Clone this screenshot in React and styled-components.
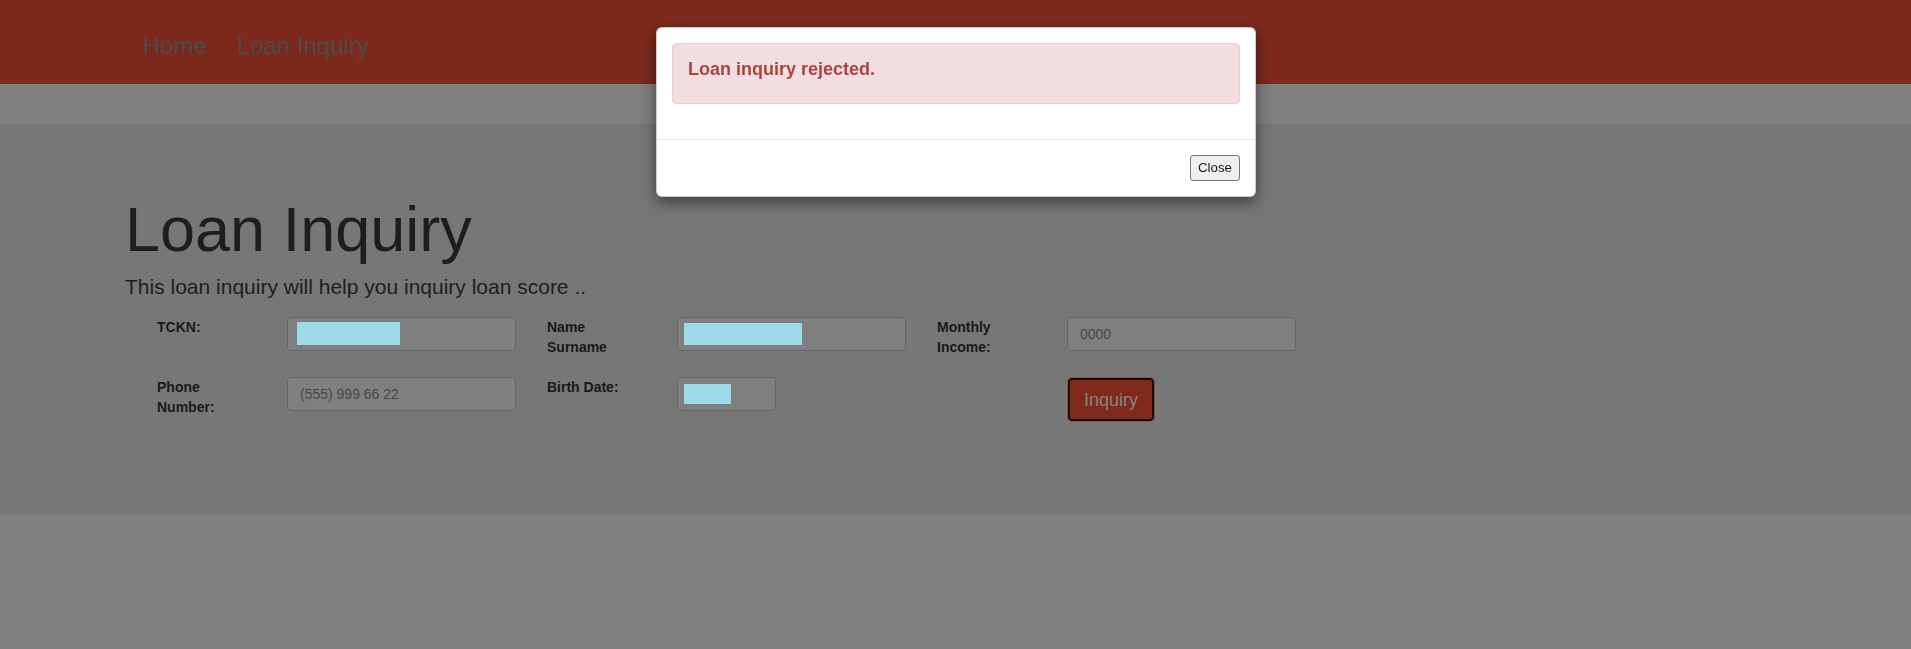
import React from "react";
import styled, { createGlobalStyle } from "styled-components";

const GlobalStyle = createGlobalStyle`
  html, body {
    margin: 0;
    padding: 0;
    background-color: #808080;
    font-family: "Liberation Sans", Arial, sans-serif;
  }
  * {
    box-sizing: border-box;
  }
`;

// Page (already dimmed by the modal backdrop)
const Page = styled.div`
  min-height: 649px;
  background-color: #808080;
`;

const Navbar = styled.nav`
  height: 84px;
  background-color: #7d2a1d;
  display: flex;
  align-items: flex-start;
  padding-left: 128px;
`;

const NavLink = styled.a`
  display: block;
  padding: 32px 15px 0;
  font-size: 24px;
  line-height: 27px;
  color: #4b4b4b;
  text-decoration: none;
`;

const Jumbotron = styled.section`
  margin-top: 40px;
  height: 391px;
  background-color: #777777;
  padding: 71px 0 0 125px;
`;

const Title = styled.h1`
  margin: 0;
  font-size: 63px;
  line-height: 69px;
  font-weight: 400;
  color: #1e1e1e;
`;

const Lead = styled.p`
  margin: 8px 0 15px;
  font-size: 21px;
  line-height: 30px;
  font-weight: 200;
  color: #1e1e1e;
`;

const Form = styled.form`
  display: flex;
  flex-direction: column;
  gap: 20px;
  padding-left: 32px;
`;

const FormRow = styled.div`
  display: flex;
  align-items: flex-start;
  gap: 31px;
`;

const Group = styled.div`
  display: grid;
  grid-template-columns: 130px 229px;
  align-items: start;
  min-height: 40px;
`;

const Label = styled.label`
  max-width: 100px;
  font-size: 14px;
  line-height: 20px;
  font-weight: 700;
  color: #1a1a1a;
`;

const Input = styled.input`
  width: ${(p) => p.$width || 229}px;
  height: 34px;
  padding: 6px 12px;
  border: 1px solid #666666;
  border-radius: 4px;
  background-color: #7f7f7f;
  font-family: inherit;
  font-size: 14px;
  color: #2a2a2a;
  outline: none;

  &::placeholder {
    color: #474747;
  }
`;

const MaskedField = styled.div`
  width: ${(p) => p.$width || 229}px;
  height: 34px;
  border: 1px solid #666666;
  border-radius: 4px;
  background-color: #7f7f7f;
  padding: ${(p) => p.$top}px 0 0 ${(p) => p.$left}px;
`;

const Mask = styled.span`
  display: block;
  width: ${(p) => p.$w}px;
  height: ${(p) => p.$h}px;
  background-color: #9cdaea;
`;

const SubmitButton = styled.button`
  justify-self: start;
  height: 45px;
  padding: 0 16px;
  border: 1px solid #a14a3a;
  border-radius: 5px;
  box-shadow: inset 0 0 0 2px #101010;
  background-color: #7f2a1c;
  font-family: inherit;
  font-size: 18px;
  line-height: 24px;
  color: #868686;
`;

// Modal
const Modal = styled.div`
  position: fixed;
  top: 27px;
  left: 656px;
  width: 600px;
  background-color: #ffffff;
  border: 1px solid rgba(0, 0, 0, 0.2);
  border-radius: 6px;
  box-shadow: 0 5px 15px rgba(0, 0, 0, 0.5);
  z-index: 1050;
`;

const ModalBody = styled.div`
  padding: 15px;
`;

const Alert = styled.div`
  margin-bottom: 20px;
  padding: 15px;
  border: 1px solid #ebccd1;
  border-radius: 4px;
  background-color: #f2dede;
  color: #a94442;
`;

const AlertText = styled.h4`
  margin: 0 0 9px;
  font-size: 18px;
  line-height: 20px;
  font-weight: 700;
`;

const ModalFooter = styled.div`
  display: flex;
  justify-content: flex-end;
  padding: 15px;
  border-top: 1px solid #e5e5e5;
`;

const CloseButton = styled.button`
  padding: 4px 7px 5px;
  border: 1px solid #767676;
  border-radius: 3px;
  background-color: #efefef;
  font-family: "Liberation Sans", Arial, sans-serif;
  font-size: 13.33px;
  line-height: 15px;
  color: #1a1a1a;
`;

const App = () => {
  return (
    <Page>
      <GlobalStyle />
      <Navbar>
        <NavLink href="#">Home</NavLink>
        <NavLink href="#">Loan Inquiry</NavLink>
      </Navbar>

      <Jumbotron>
        <Title>Loan Inquiry</Title>
        <Lead>This loan inquiry will help you inquiry loan score ..</Lead>

        <Form onSubmit={(e) => e.preventDefault()}>
          <FormRow>
            <Group>
              <Label>TCKN:</Label>
              <MaskedField $top={4} $left={9}>
                <Mask $w={103} $h={23} />
              </MaskedField>
            </Group>
            <Group>
              <Label>Name Surname</Label>
              <MaskedField $top={5} $left={6}>
                <Mask $w={118} $h={22} />
              </MaskedField>
            </Group>
            <Group>
              <Label>Monthly Income:</Label>
              <Input placeholder="0000" readOnly />
            </Group>
          </FormRow>

          <FormRow>
            <Group>
              <Label>Phone Number:</Label>
              <Input placeholder="(555) 999 66 22" readOnly />
            </Group>
            <Group>
              <Label>Birth Date:</Label>
              <MaskedField $width={99} $top={6} $left={6}>
                <Mask $w={47} $h={20} />
              </MaskedField>
            </Group>
            <Group>
              <Label />
              <SubmitButton type="submit">Inquiry</SubmitButton>
            </Group>
          </FormRow>
        </Form>
      </Jumbotron>

      <Modal role="dialog">
        <ModalBody>
          <Alert>
            <AlertText>Loan inquiry rejected.</AlertText>
          </Alert>
        </ModalBody>
        <ModalFooter>
          <CloseButton type="button">Close</CloseButton>
        </ModalFooter>
      </Modal>
    </Page>
  );
};

export default App;
